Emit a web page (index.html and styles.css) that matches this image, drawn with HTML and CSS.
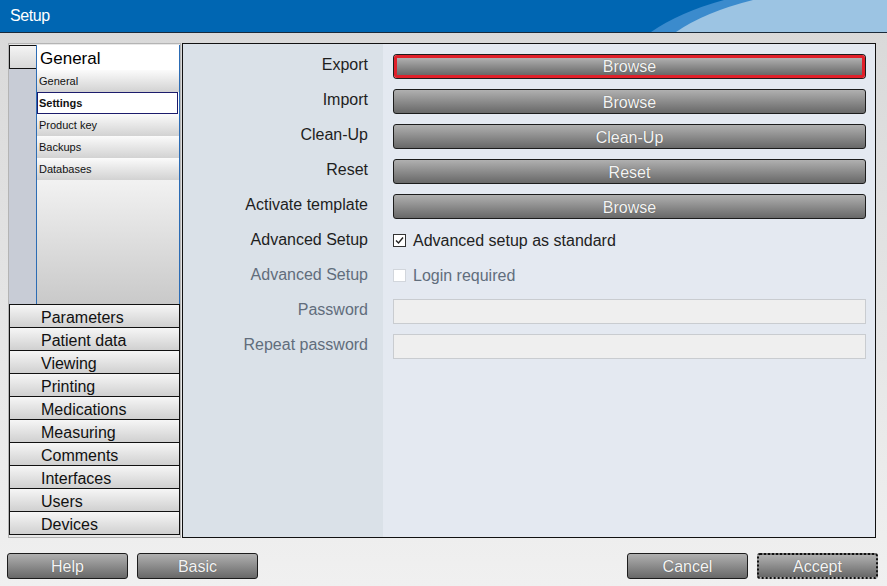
FILE: index.html
```html
<!DOCTYPE html>
<html lang="en">
<head>
    <meta charset="UTF-8">
    <title>Setup</title>
    <link rel="stylesheet" href="styles.css">
</head>
<body>
    <div class="titlebar">
        <span class="title">Setup</span>
        <svg class="swoosh" viewBox="0 0 887 32" preserveAspectRatio="none">
            <path d="M724 0 Q680 12 651 32 L887 32 L887 0 Z" fill="#3b8bcd"/>
            <path d="M753 0 Q705 12 676 32 L887 32 L887 0 Z" fill="#9cc4e3"/>
        </svg>
    </div>

    <div class="main">
        <div class="nav">
            <div class="nav-open">
                <div class="nav-strip">
                    <div class="nav-handle"></div>
                </div>
                <div class="nav-pane">
                    <div class="nav-title">General</div>
                    <ul class="sub">
                        <li>General</li>
                        <li class="active">Settings</li>
                        <li>Product key</li>
                        <li>Backups</li>
                        <li>Databases</li>
                    </ul>
                </div>
            </div>
            <ul class="cats">
                <li>Parameters</li>
                <li>Patient data</li>
                <li>Viewing</li>
                <li>Printing</li>
                <li>Medications</li>
                <li>Measuring</li>
                <li>Comments</li>
                <li>Interfaces</li>
                <li>Users</li>
                <li>Devices</li>
            </ul>
        </div>

        <div class="content">
            <div class="label">Export</div>
            <button class="btn focus-red">Browse</button>

            <div class="label">Import</div>
            <button class="btn">Browse</button>

            <div class="label">Clean-Up</div>
            <button class="btn">Clean-Up</button>

            <div class="label">Reset</div>
            <button class="btn">Reset</button>

            <div class="label">Activate template</div>
            <button class="btn">Browse</button>

            <div class="label">Advanced Setup</div>
            <div class="check">
                <svg width="13" height="13" viewBox="0 0 13 13">
                    <rect x="0.5" y="0.5" width="12" height="12" fill="#fff" stroke="#333"/>
                    <path d="M3 6.5 L5.5 9 L10 3.5" fill="none" stroke="#222" stroke-width="1.4"/>
                </svg>
                <span>Advanced setup as standard</span>
            </div>

            <div class="label disabled">Advanced Setup</div>
            <div class="check disabled">
                <svg width="13" height="13" viewBox="0 0 13 13">
                    <rect x="0.5" y="0.5" width="12" height="12" fill="#fff" stroke="#d2d6dc"/>
                </svg>
                <span>Login required</span>
            </div>

            <div class="label disabled">Password</div>
            <input class="field" type="password" disabled>

            <div class="label disabled">Repeat password</div>
            <input class="field" type="password" disabled>
        </div>
    </div>

    <div class="footer">
        <div class="group">
            <button class="btn small">Help</button>
            <button class="btn small">Basic</button>
        </div>
        <div class="group">
            <button class="btn small">Cancel</button>
            <button class="btn small default">Accept</button>
        </div>
    </div>
</body>
</html>
```

FILE: styles.css
```css
body {
    margin: 0;
    width: 887px;
    height: 586px;
    overflow: hidden;
    font-family: 'Liberation Sans', Arial, sans-serif;
    font-size: 16px;
    color: #222;
    background: linear-gradient(#d8d8d8, #f0f0f0);
}
ul {
    list-style: none;
    margin: 0;
    padding: 0;
}

/* title bar */
.titlebar {
    position: relative;
    height: 32px;
    background-color: #0066b2;
    border-bottom: 1px solid #1a2a3a;
    overflow: hidden;
}
.title {
    position: relative;
    z-index: 1;
    display: inline-block;
    margin: 7px 0 0 10px;
    color: #fff;
    font-size: 16px;
    letter-spacing: -0.4px;
}
.swoosh {
    position: absolute;
    top: 0;
    left: 0;
    width: 887px;
    height: 32px;
}

/* main area */
.main {
    display: flex;
    gap: 1px;
    padding: 10px 0 0 8px;
    height: 495px;
}

/* left navigation */
.nav {
    width: 171px;
    border: 1px solid #b4b4b4;
    background-color: #e8e8e8;
    padding-top: 1px;
    display: flex;
    flex-direction: column;
}
.nav-open {
    display: flex;
    height: 259px;
}
.nav-strip {
    width: 27px;
    background-color: #c8ccd6;
}
.nav-handle {
    height: 22px;
    border: 1px solid #111;
    border-right: none;
    background: linear-gradient(#f4f4f4, #d8d8d8);
}
.nav-pane {
    flex: 1;
    border-left: 1px solid #2c6cb4;
    border-right: 1px solid #2c6cb4;
    background: linear-gradient(#ffffff 40%, #f2f2f2 52%, #c9c9c9);
}
.nav-title {
    height: 25px;
    padding-left: 3px;
    line-height: 27px;
    font-size: 17px;
    color: #000;
    background-color: #fff;
}
.sub li {
    height: 22px;
    line-height: 22px;
    padding-left: 2px;
    font-size: 11px;
    color: #111;
    background: linear-gradient(#fbfbfb, #d2d2d2);
}
.sub li.active {
    height: 20px;
    line-height: 20px;
    margin: 0 1px 0 0;
    padding-left: 1px;
    border: 1px solid #1c1c6c;
    background: #fff;
    font-weight: bold;
}
.cats li {
    height: 21px;
    padding-top: 1px;
    line-height: 23px;
    padding-left: 31px;
    border-top: 1px solid #111;
    border-left: 1px solid #111;
    border-right: 1px solid #111;
    color: #111;
    background: linear-gradient(#f6f6f6, #d0d0d0);
}
.cats li:last-child {
    border-bottom: 1px solid #111;
}

/* settings form */
.content {
    width: 694px;
    border: 1px solid #111;
    display: grid;
    grid-template-columns: 200px 473px;
    grid-auto-rows: 25px;
    row-gap: 10px;
    column-gap: 10px;
    align-content: start;
    padding-top: 10px;
    box-sizing: border-box;
    height: 495px;
    background: linear-gradient(to right, #dae1e8 200px, #e4e9f1 200px);
}
.label {
    text-align: right;
    padding-right: 15px;
    line-height: 22px;
    color: #1e1e1e;
}
.label.disabled {
    color: #616d7c;
}
.check {
    display: flex;
    align-items: center;
    gap: 7px;
    padding-bottom: 2px;
}
.check.disabled span {
    color: #616d7c;
}
.field {
    margin: 0;
    height: 25px;
    box-sizing: border-box;
    border: 1px solid #c9ccd0;
    background-color: #efefef;
}

/* buttons */
.btn {
    margin: 0;
    height: 25px;
    border: 1px solid #1c1c1c;
    border-radius: 3px;
    background: linear-gradient(#b0b0b0, #8c8c8c 50%, #686868);
    color: #f4f4f4;
    font-family: 'Liberation Sans', Arial, sans-serif;
    font-size: 16px;
    padding: 2px 0 0;
    text-shadow: 0 0 1px rgba(0,0,0,0.4);
}
.btn.focus-red {
    border: 3px solid #e0202a;
    box-shadow: 0 0 0 1px #1c1c1c;
    height: 23px;
    margin: 1px 1px;
    width: 471px;
    line-height: 16px;
    padding-top: 1px;
}
.btn.small {
    width: 121px;
    height: 26px;
}
.btn.default {
    border: 2px dotted #111;
}

/* footer */
.footer {
    display: flex;
    justify-content: space-between;
    padding: 15px 9px 0 7px;
}
.group {
    display: flex;
    gap: 9px;
}
```
